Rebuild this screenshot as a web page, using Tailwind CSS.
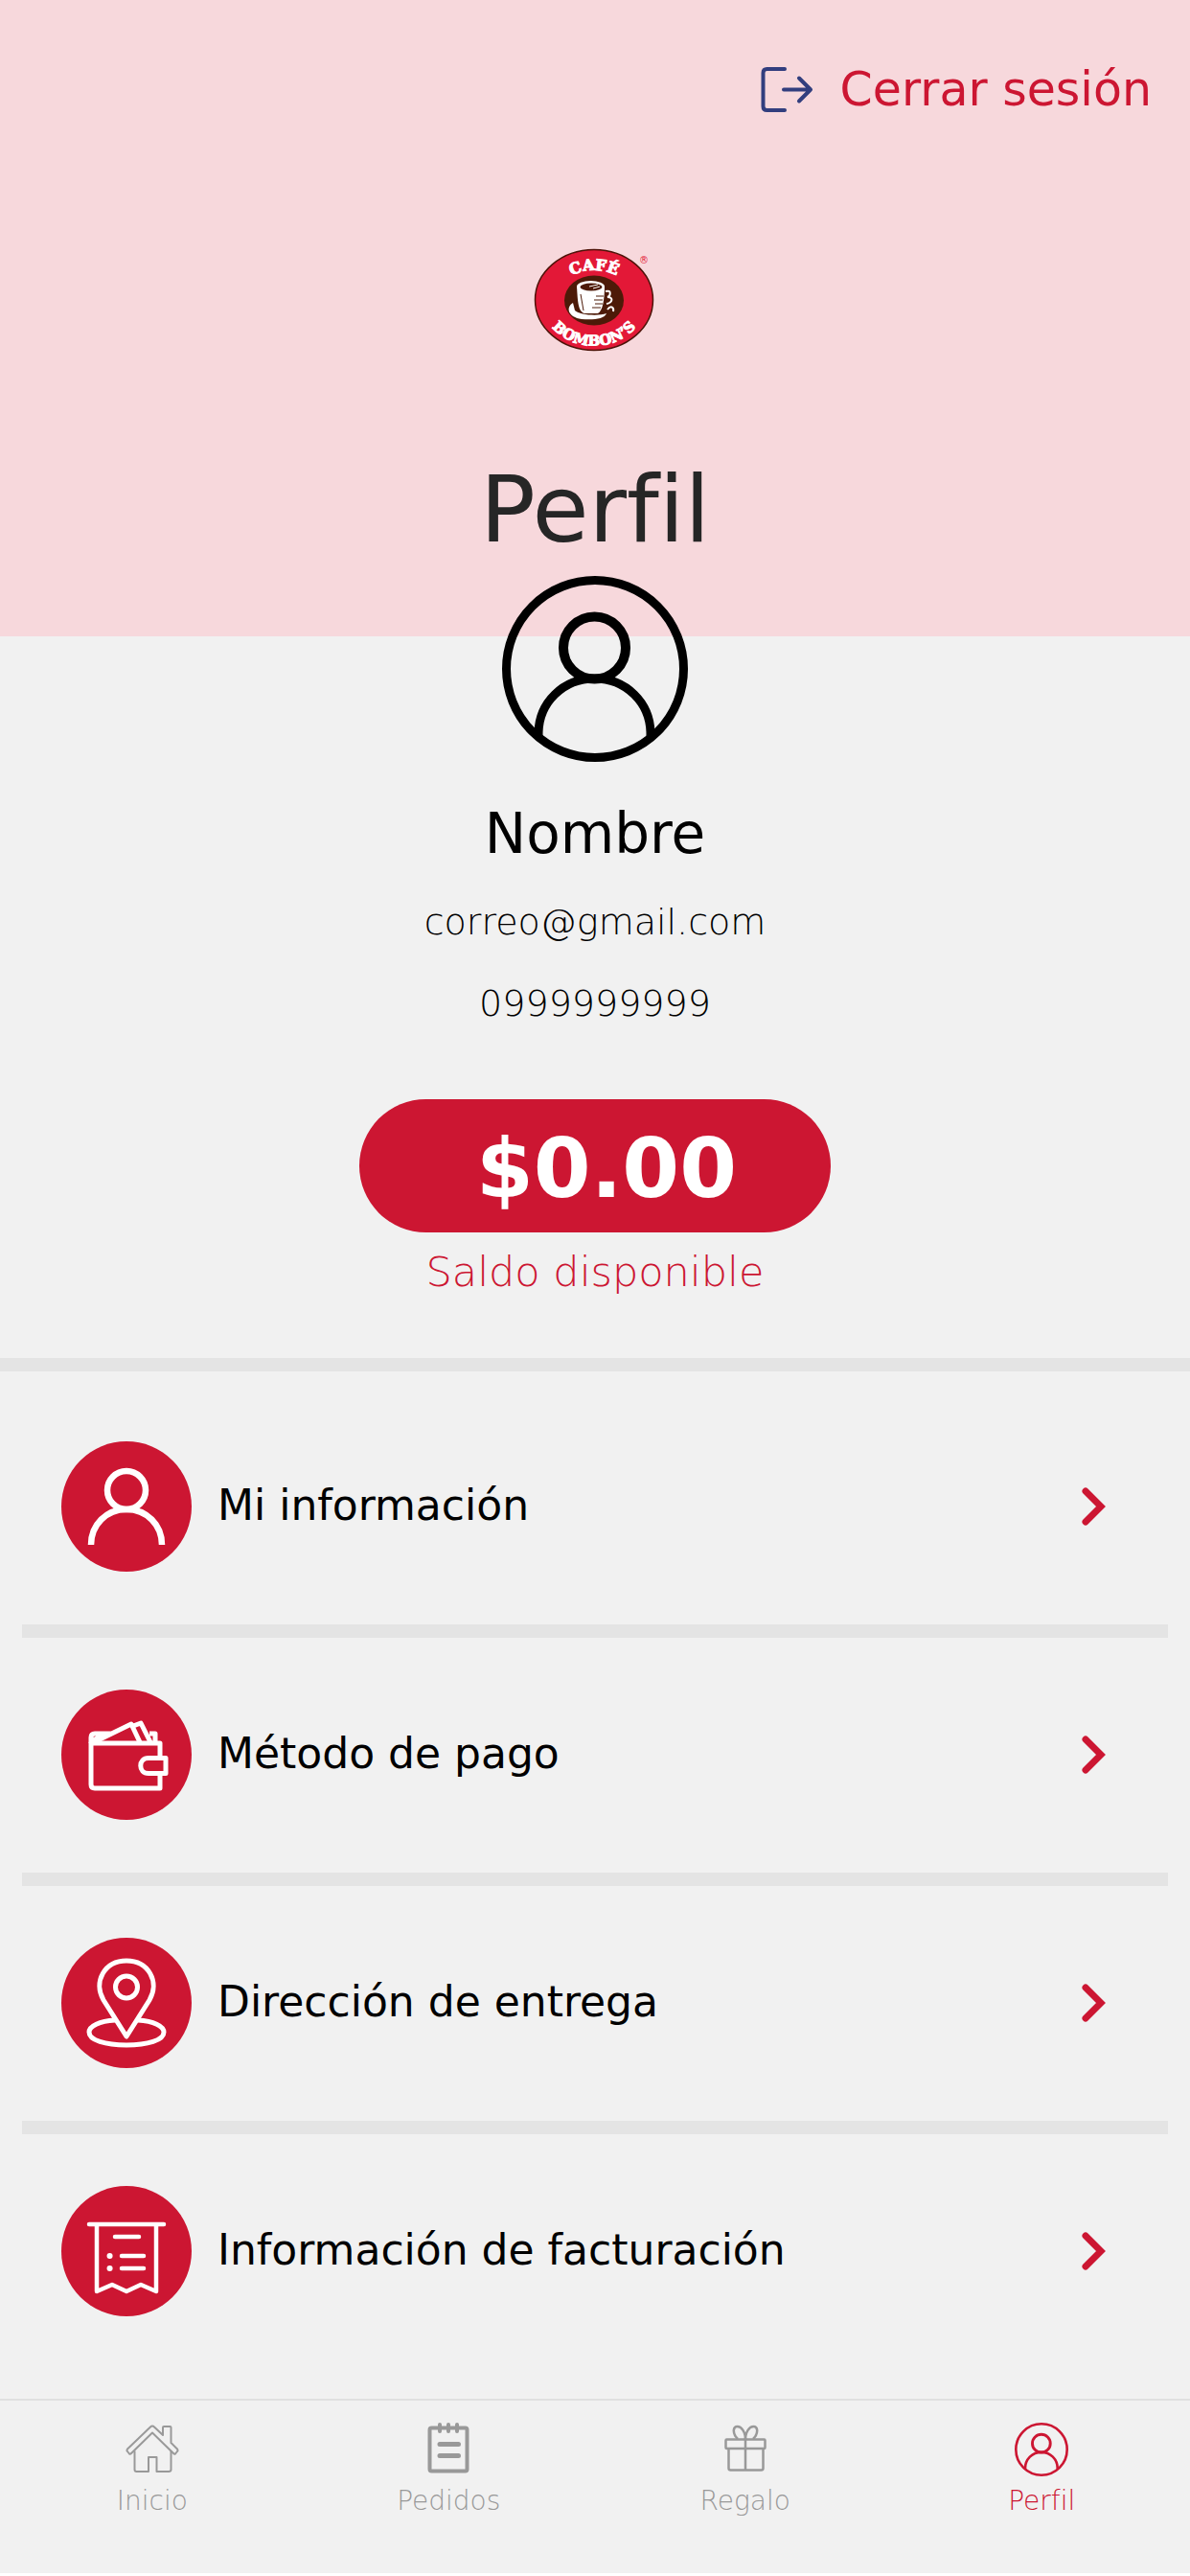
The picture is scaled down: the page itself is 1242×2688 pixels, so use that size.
<!DOCTYPE html>
<html lang="es">
<head>
    <meta charset="UTF-8">
    <meta name="viewport" content="width=device-width, initial-scale=1.0">
    <title>Café Bombon's - Perfil</title>
    <script src="https://cdn.jsdelivr.net/npm/@tailwindcss/browser@4"></script>
</head>
<body class="bg-white font-['DejaVu_Sans',sans-serif] text-black">
    <div class="min-h-[2685px] bg-[#f1f1f1] flex flex-col">

        <!-- Header -->
        <header class="bg-[#f7d8dc] flex flex-col items-center pt-16 pb-[76px]">
            <button type="button" class="self-end mr-10 flex items-center gap-7 text-[49px] leading-[60px] text-[#cc1632]">
                <svg class="w-14 h-14" viewBox="0 0 56 56" fill="none" stroke="#323e7e" stroke-width="4" stroke-linecap="round" stroke-linejoin="round" aria-hidden="true">
                    <path d="M26 6H7.500Q3.500 6 3.500 10V45Q3.500 49 7.500 49H26M25 27.500H53M41 15.500L53 27.500L41 39.500"/>
                </svg>
                Cerrar sesión
            </button>

            <svg class="mt-[132px] w-[140px] h-[116px]" viewBox="0 0 140 116" role="img" aria-label="Café Bombon's">
                <ellipse cx="69" cy="57" rx="61.500" ry="52.500" fill="#e31837" stroke="#4d1208" stroke-width="1.500"/>
                <ellipse cx="69" cy="57.500" rx="31" ry="26" fill="#4d1a08"/>
                <defs>
                    <path id="arcTop" d="M29 47A44 36 0 0 1 109 47"/>
                    <path id="arcBottom" d="M19 76A54 46 0 0 0 119 76"/>
                </defs>
                <g fill="#fff" stroke="#fff" stroke-width="1" font-family="'DejaVu Serif',serif" font-weight="700" text-anchor="middle">
                    <text font-size="16"><textPath href="#arcTop" startOffset="50%">CAFÉ</textPath></text>
                    <text font-size="15"><textPath href="#arcBottom" startOffset="50%">BOMBON’S</textPath></text>
                </g>
                <text x="121" y="19" font-size="10" font-family="'DejaVu Sans',sans-serif" text-anchor="middle" fill="#e31837">®</text>
                <!-- cup -->
                <path d="M47 60C39 65 42 75 56 77C68 78 80 77 82 71C74 74 54 73 49 68Z" fill="#fff"/>
                <path d="M51 43C52 57 52 69 59 71H73C78 69 80 56 80 43Z" fill="#fff"/>
                <ellipse cx="65.500" cy="43" rx="14.500" ry="6" fill="#fff"/>
                <ellipse cx="66" cy="43.500" rx="11.500" ry="4" fill="#4d1a08"/>
                <path d="M64 43L73 41M68 45L75 43" stroke="#fff" stroke-width="1"/>
                <path d="M55 51L58 68M71 53H79M69 57H78M70 61H78M67 65H76" stroke="#4d1a08" stroke-width="1" fill="none"/>
                <path d="M81 48C88 46 86 53 83 54C90 54 88 60 82 61M83 67C87 62 90 65 89 69" stroke="#fff" stroke-width="2" fill="none"/>
            </svg>

            <h1 class="mt-[104px] text-[96px] leading-[112px] text-[#262626]">Perfil</h1>
        </header>

        <!-- User data -->
        <section class="-mt-[63px] flex flex-col items-center pb-[65px] border-b-[14px] border-[#e4e4e4]">
            <svg class="w-[194px] h-[194px]" viewBox="0 0 194 194" fill="none" stroke="#000" stroke-width="9" aria-hidden="true">
                <circle cx="97" cy="97" r="92.500"/>
                <circle cx="96.500" cy="75" r="32.500" stroke-width="10"/>
                <path d="M38 168V165C38 132 64 107 96.500 107S155 132 155 165V168"/>
            </svg>
            <h2 class="mt-[41px] text-[58px] leading-[68px]">Nombre</h2>
            <p class="mt-9 text-[38px] leading-[44px] font-extralight">correo@gmail.com</p>
            <p class="mt-[41px] text-[38px] leading-[44px] font-extralight">0999999999</p>
            <div class="mt-[78px] w-[492px] h-[139px] pl-6 pt-1 rounded-full bg-[#cc1632] flex items-center justify-center text-[86px] leading-[100px] font-bold text-white">$0.00</div>
            <p class="mt-4 text-[43px] leading-[50px] font-extralight text-[#cc1632]">Saldo disponible</p>
        </section>

        <!-- Options -->
        <ul class="mx-[23px] pt-[19px] divide-y-[14px] divide-[#e4e4e4]">
            <li>
                <a href="#informacion" class="flex items-center gap-[27px] pt-[54px] pb-[55px] pl-[41px] pr-16 text-[44px] leading-[52px]">
                    <svg class="w-[136px] h-[136px] rounded-full bg-[#cc1632]" viewBox="0 0 136 136" fill="none" stroke="#fff" stroke-width="6.500" aria-hidden="true">
                        <circle cx="68" cy="51" r="20"/>
                        <path d="M31 108C31 87 47 71 68 71S105 87 105 108"/>
                    </svg>
                    <span class="flex-1 pb-0.5">Mi información</span>
                    <svg class="w-7 h-10" viewBox="0 0 28 40" fill="none" stroke="#cc1632" stroke-width="7" stroke-linecap="round" aria-hidden="true"><path d="M6 4L22 20L6 36"/></svg>
                </a>
            </li>
            <li>
                <a href="#pago" class="flex items-center gap-[27px] pt-[54px] pb-[55px] pl-[41px] pr-16 text-[44px] leading-[52px]">
                    <svg class="w-[136px] h-[136px] rounded-full bg-[#cc1632]" viewBox="0 0 136 136" fill="none" stroke="#fff" stroke-width="5" stroke-linejoin="round" aria-hidden="true">
                        <path d="M103 71V56H31V99Q31 103 35 103H103V88"/>
                        <path d="M31 56V50Q31 46 35 46H52M92 46H98V55M34 55L73 36L82 55M32 54L42 48M75 38L83 35L93 55"/>
                        <path d="M109 71.500V87.500H91C80 87.500 80 71.500 91 71.500Z"/>
                    </svg>
                    <span class="flex-1 pb-0.5">Método de pago</span>
                    <svg class="w-7 h-10" viewBox="0 0 28 40" fill="none" stroke="#cc1632" stroke-width="7" stroke-linecap="round" aria-hidden="true"><path d="M6 4L22 20L6 36"/></svg>
                </a>
            </li>
            <li>
                <a href="#direccion" class="flex items-center gap-[27px] pt-[54px] pb-[55px] pl-[41px] pr-16 text-[44px] leading-[52px]">
                    <svg class="w-[136px] h-[136px] rounded-full bg-[#cc1632]" viewBox="0 0 136 136" fill="none" stroke="#fff" stroke-width="5" stroke-linecap="round" stroke-linejoin="round" aria-hidden="true">
                        <path d="M68 103L44 65C33 46 45 24 68 24S103 46 92 65Z"/>
                        <circle cx="68" cy="51.500" r="11.500"/>
                        <path d="M56 86C40 87 29 92 29 98.500C29 107 46 112 68 112S107 107 107 98.500C107 92 96 87 80 86"/>
                    </svg>
                    <span class="flex-1 pb-0.5">Dirección de entrega</span>
                    <svg class="w-7 h-10" viewBox="0 0 28 40" fill="none" stroke="#cc1632" stroke-width="7" stroke-linecap="round" aria-hidden="true"><path d="M6 4L22 20L6 36"/></svg>
                </a>
            </li>
            <li>
                <a href="#facturacion" class="flex items-center gap-[27px] pt-[54px] pb-[55px] pl-[41px] pr-16 text-[44px] leading-[52px]">
                    <svg class="w-[136px] h-[136px] rounded-full bg-[#cc1632]" viewBox="0 0 136 136" fill="none" stroke="#fff" stroke-width="4.500" stroke-linecap="round" stroke-linejoin="round" aria-hidden="true">
                        <path d="M29 40H107M37 40V110L53 103L68 110L83 103L99 110V40"/>
                        <path d="M56 53H81M63 73H86M63 86H86"/>
                        <path stroke-width="6" d="M50.500 73H50.600M50.500 86H50.600"/>
                    </svg>
                    <span class="flex-1 pb-0.5">Información de facturación</span>
                    <svg class="w-7 h-10" viewBox="0 0 28 40" fill="none" stroke="#cc1632" stroke-width="7" stroke-linecap="round" aria-hidden="true"><path d="M6 4L22 20L6 36"/></svg>
                </a>
            </li>
        </ul>

        <!-- Bottom bar -->
        <nav class="mt-auto h-[182px] border-t-2 border-[#e0e0e0] pt-[23px] pl-1 grid grid-cols-4 items-start text-[28px] leading-9 font-extralight text-[#999]">
            <a href="#inicio" class="flex flex-col items-center gap-2">
                <svg class="w-14 h-14" viewBox="0 0 56 56" fill="none" stroke="#999" stroke-width="2" stroke-linejoin="round" aria-hidden="true">
                    <path d="M26 4.500Q28 2.500 30 4.500L39 13V5Q39 4 40 4H46.500Q47.500 4 47.500 5V21L54 27.500Q55 29 54 30L52 32.500Q51 33 50 32L28 10.500L6 32Q5 33 4 32.500L2 30Q1 29 2 27.500Z"/>
                    <path d="M9.500 29.500V49Q9.500 51 11.500 51H24V36H32.500V51H45Q47.500 51 47.500 49V29.500"/>
                </svg>
                Inicio
            </a>
            <a href="#pedidos" class="flex flex-col items-center gap-2">
                <svg class="w-14 h-14" viewBox="0 0 56 56" fill="none" stroke="#999" stroke-width="4" stroke-linecap="round" aria-hidden="true">
                    <rect x="8.500" y="5.500" width="39" height="45" rx="2"/>
                    <path d="M19 2V9M28 2V9M37 2V9"/>
                    <path stroke-width="5" d="M19 22.500H38.500M19 34.500H38.500"/>
                </svg>
                Pedidos
            </a>
            <a href="#regalo" class="flex flex-col items-center gap-2">
                <svg class="w-14 h-14" viewBox="0 0 56 56" fill="none" stroke="#999" stroke-width="2.500" stroke-linejoin="round" aria-hidden="true">
                    <rect x="7.500" y="17.500" width="41" height="9.500" rx="1"/>
                    <path d="M10.500 27V47.500Q10.500 49.500 12.500 49.500H44.500Q46.500 49.500 46.500 47.500V27M28 16V50"/>
                    <path d="M28 17C28 10 24 4 19.500 4C15 4 15 10 17.500 14Q19 16 20 17M28 17C28 10 32 4 36.500 4C41 4 41 10 38.500 14Q37 16 36 17"/>
                </svg>
                Regalo
            </a>
            <a href="#perfil" aria-current="page" class="flex flex-col items-center gap-2 text-[#cc1632]">
                <svg class="w-14 h-14" viewBox="0 0 194 194" fill="none" stroke="#cc1632" stroke-width="9" aria-hidden="true">
                    <circle cx="97" cy="97" r="92.500"/>
                    <circle cx="96.500" cy="75" r="32.500" stroke-width="10"/>
                    <path d="M38 168V165C38 132 64 107 96.500 107S155 132 155 165V168"/>
                </svg>
                Perfil
            </a>
        </nav>
    </div>
</body>
</html>
